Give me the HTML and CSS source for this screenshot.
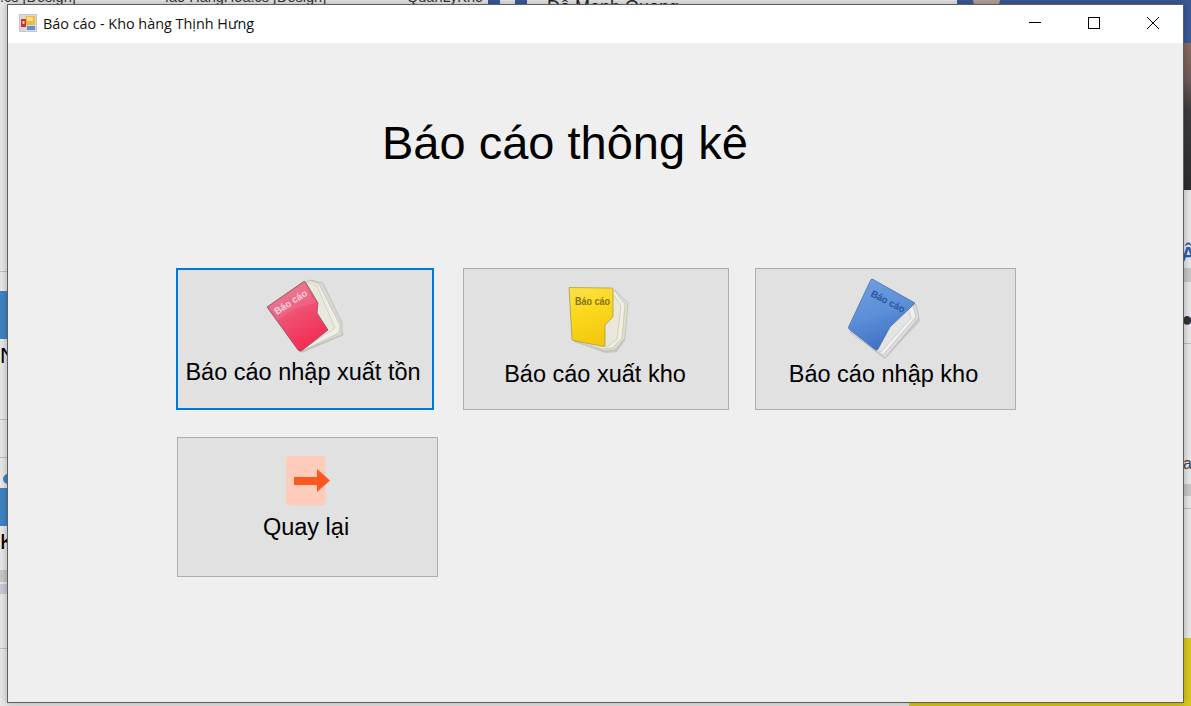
FILE: index.html
```html
<!DOCTYPE html>
<html lang="vi">
<head>
<meta charset="utf-8">
<title>Báo cáo - Kho hàng Thịnh Hưng</title>
<link rel="stylesheet" href="styles.css">
</head>
<body>
<div class="desktop">
  <div class="bg-top">
    <span class="tab tab-a">.cs [Design]</span>
    <span class="tab tab-b">fao HangHoa.cs [Design]</span>
    <span class="tab tab-c">QuanLyKho</span>
    <span class="fb-sq sq1"></span>
    <span class="fb-sq sq2"></span>
    <span class="tab-fb">Đỗ Mạnh Quang</span>
    <span class="fb-bar"></span>
    <span class="fb-face"></span>
  </div>
  <div class="bg-left-blue bl1"></div>
  <div class="bg-left-blue bl2"></div>
  <div class="bg-dot"></div>
  <div class="bg-letter l1">N</div>
  <div class="bg-letter l2">K</div>
  <div class="bg-band b1"></div>
  <div class="bg-band b2"></div>
  <div class="bg-band b3"></div>
  <div class="bg-band b4"></div>
  <div class="bg-photo"></div>
  <div class="bg-fbside"></div>
  <div class="bg-yellow"></div>
  <div class="bg-line ln1"></div>
  <div class="bg-line ln2"></div>
  <div class="bg-line ln3"></div>
  <div class="bg-line ln4"></div>
  <div class="bg-line ln5"></div>
  <div class="bg-line ln6"></div>
  <div class="bg-side side-a">Â</div>
  <div class="bg-side side-d">●</div>
  <div class="bg-side side-s">a</div>

  <main class="window">
    <header class="titlebar">
      <svg class="app-icon" width="18" height="18" viewBox="0 0 18 18">
        <rect x="0.5" y="0.5" width="17" height="17" fill="#d8d8d8" stroke="#c8c8c8"/>
        <rect x="2" y="5" width="5" height="8" fill="#c8332c"/>
        <rect x="3.5" y="7" width="2" height="3" fill="#f2d0c8"/>
        <rect x="7" y="2" width="9" height="9" fill="#f3b93a"/>
        <rect x="8" y="3" width="6" height="4" fill="#fbe08a"/>
        <rect x="8" y="12" width="8" height="4" fill="#5d8fd8"/>
      </svg>
      <span class="title-text">Báo cáo - Kho hàng Thịnh Hưng</span>
      <div class="controls">
        <button class="ctl" aria-label="Thu nhỏ"><svg width="12" height="12" viewBox="0 0 12 12"><path d="M0 5.5h12" stroke="#000" fill="none"/></svg></button>
        <button class="ctl" aria-label="Phóng to"><svg width="12" height="12" viewBox="0 0 12 12"><rect x="0.5" y="0.5" width="11" height="11" stroke="#000" fill="none"/></svg></button>
        <button class="ctl" aria-label="Đóng"><svg width="12" height="12" viewBox="0 0 12 12"><path d="M0 0L12 12M12 0L0 12" stroke="#000" fill="none"/></svg></button>
      </div>
    </header>
    <div class="form">
      <h1 class="heading">Báo cáo thông kê</h1>
      <div class="row row-one">
        <button class="tile tile-focus">
          <svg class="tile-icon icon-a" width="85" height="80" viewBox="0 0 85 80">
            <defs>
              <linearGradient id="pink" x1="0.1" y1="0" x2="0.6" y2="1"><stop offset="0" stop-color="#e57f98"/><stop offset=".45" stop-color="#ee5577"/><stop offset="1" stop-color="#f52a52"/></linearGradient>
            </defs>
            <path d="M10 36 L42 78 L84 60 L60 8 L48 5 Z" fill="#8c8c84" opacity=".3"/>
            <path d="M50 5 L63 8 L82 48 L82 60 L40 77 Z" fill="#d9d9cf" stroke="#b4b4a9" stroke-width=".7"/>
            <path d="M48 5 L59 9 L80 50 L79 58 L40 77 Z" fill="#eeeee4" stroke="#bdbdb2" stroke-width=".7"/>
            <path d="M46 6 L57 11 L75 53 L40 76 Z" fill="#e8e8dd" stroke="#c4c4b9" stroke-width=".7"/>
            <path d="M7 32 L43 7 Q45 5.5 46 8 L58 28 L57 38 L68 55 L42 75.5 Q40 77 38 75 Z" fill="url(#pink)" stroke="#7c5a62" stroke-width=".8"/>
            <path d="M9 32 L44 8 L56 28 Q32 32 18 46 Z" fill="#fff" opacity=".08"/>
            <text class="icon-label label-pink" x="17" y="40" transform="rotate(-33 17 40)" textLength="37" lengthAdjust="spacingAndGlyphs">Báo cáo</text>
          </svg>
          <span class="tile-label label-a">Báo cáo nhập xuất tồn</span>
        </button>
        <button class="tile tile-b">
          <svg class="tile-icon icon-b" width="65" height="72" viewBox="0 0 65 72">
            <defs>
              <linearGradient id="yel" x1="0" y1="0" x2="0.3" y2="1"><stop offset="0" stop-color="#fbe14a"/><stop offset=".5" stop-color="#fbd81c"/><stop offset="1" stop-color="#f4c80f"/></linearGradient>
            </defs>
            <path d="M6 56 L40 69 L52 68 L61 55 Z" fill="#8c8c84" opacity=".3"/>
            <path d="M50 6 L63 19 L60 54 L50 66 L40 67 L10 58 Z" fill="#dedfcf" stroke="#b8b8a8" stroke-width=".7"/>
            <path d="M49 6 L60 20 L57 54 L48 64 L38 65 L10 57 Z" fill="#efeee0" stroke="#c0c0b0" stroke-width=".7"/>
            <path d="M48 10 L56 22 L52 55 L42 63 L10 56 Z" fill="#e9e8da" stroke="#c6c6b6" stroke-width=".7"/>
            <path d="M4 3.5 L47 4 Q48 4 48 6 L48 33 L40 41 L40 61 Q40 63 38 62.5 L8 56.5 Q7 56 7 55 Z" fill="url(#yel)" stroke="#a1934c" stroke-width=".7"/>
            <text class="icon-label label-yellow" x="10" y="21" textLength="35" lengthAdjust="spacingAndGlyphs">Báo cáo</text>
          </svg>
          <span class="tile-label label-b">Báo cáo xuất kho</span>
        </button>
        <button class="tile tile-c">
          <svg class="tile-icon icon-c" width="80" height="84" viewBox="0 0 80 84">
            <defs>
              <linearGradient id="blu" x1="0.2" y1="0" x2="0.5" y2="1"><stop offset="0" stop-color="#6f9fe0"/><stop offset=".5" stop-color="#5b8fd8"/><stop offset="1" stop-color="#3f70c4"/></linearGradient>
            </defs>
            <path d="M5 56 L40 83 L75 45 L70 30 Z" fill="#8c8c88" opacity=".3"/>
            <path d="M71 28 L74 42 L40 82 L5 56 Z" fill="#dcdcdc" stroke="#b5b5b5" stroke-width=".7"/>
            <path d="M68 30 L71 41 L38 79 L5 54 Z" fill="#f0f0ee" stroke="#bdbdbd" stroke-width=".7"/>
            <path d="M64 34 L66 42 L36 76 L6 53 Z" fill="#e4e4e6" stroke="#c4c4c4" stroke-width=".7"/>
            <path d="M26 3.5 Q27 2.5 29 4 L70 27 L65 32 L45 51 L33 73 Q32 75 30 73.5 L4 53 Q3 51 4 50 Z" fill="url(#blu)" stroke="#4565a0" stroke-width=".7"/>
            <text class="icon-label label-blue" x="25" y="20" transform="rotate(27 25 20)" textLength="37" lengthAdjust="spacingAndGlyphs">Báo cáo</text>
          </svg>
          <span class="tile-label label-c">Báo cáo nhập kho</span>
        </button>
      </div>
      <div class="row row-two">
        <button class="tile tile-d">
          <svg class="tile-icon icon-d" width="44" height="50" viewBox="0 0 44 50">
            <rect x="0" y="0" width="39.500" height="49.500" rx="4" fill="#ffccbc"/>
            <path d="M8 21h23v-8l13 11.500-13 11.500v-7H8z" fill="#ff5722"/>
          </svg>
          <span class="tile-label label-d">Quay lại</span>
        </button>
      </div>
    </div>
  </main>
</div>
</body>
</html>
```
FILE: styles.css
```css
* { box-sizing: border-box; }
html, body { margin: 0; padding: 0; }
body { width: 1191px; height: 706px; overflow: hidden; font-family: "Liberation Sans", Arial, sans-serif; }
.desktop { position: relative; width: 1191px; height: 706px; overflow: hidden; background: #e6e6e6; }

.bg-top { position: absolute; left: 0; top: 0; width: 1191px; height: 8px; background: #e6e6e6; overflow: hidden; }
.tab { position: absolute; top: -11px; font-size: 14.500px; color: #333; white-space: nowrap; }
.tab-a { left: 0; }
.tab-b { left: 165px; }
.tab-c { left: 407px; }
.tab-fb { position: absolute; left: 547px; top: -3px; font-size: 18px; color: #222; white-space: nowrap; }
.fb-sq { position: absolute; top: 0; height: 8px; background: #3b5998; }
.sq1 { left: 488px; width: 12px; }
.sq2 { left: 515px; width: 12px; }
.fb-bar { position: absolute; left: 957px; top: 0; width: 234px; height: 8px; background: #3b5998; }
.fb-face { position: absolute; left: 973px; top: 0; width: 27px; height: 8px; border-radius: 0 0 10px 10px; background: #b8a09a; }

.bg-left-blue { position: absolute; left: 0; width: 8px; background: #3d85c6; }
.bl1 { top: 291px; height: 48px; }
.bl2 { top: 488px; height: 38px; }
.bg-dot { position: absolute; left: 3px; top: 474px; width: 10px; height: 10px; border-radius: 50%; background: #3d85c6; }
.bg-letter { position: absolute; left: 0; font-size: 22px; color: #000; }
.l1 { top: 343px; }
.l2 { top: 529px; }
.bg-band { position: absolute; height: 12px; width: 8px; background: #c6c6c6; }
.b1 { left: 0; top: 570px; }
.b2 { left: 0; top: 584px; background: #c6c8d6; height: 10px; }
.b3 { left: 1183px; top: 484px; height: 12px; }
.b4 { left: 1183px; top: 268px; height: 14px; }
.bg-photo { position: absolute; left: 1183px; top: 43px; width: 8px; height: 147px; background: linear-gradient(#8a6a60 0, #6e5a58 25%, #3e3c40 45%, #2c2c30 100%); }
.bg-fbside { position: absolute; left: 1183px; top: 0; width: 8px; height: 43px; background: #3b5998; }
.bg-yellow { position: absolute; left: 909px; top: 638px; width: 282px; height: 68px; background: #d6c81c; }
.bg-line { position: absolute; height: 1px; background: #bdbdbd; }
.ln1 { left: 0; width: 8px; top: 271px; }
.ln2 { left: 0; width: 8px; top: 419px; }
.ln3 { left: 0; width: 8px; top: 457px; }
.ln4 { left: 0; width: 8px; top: 648px; }
.ln5 { left: 1183px; width: 8px; top: 343px; }
.ln6 { left: 1183px; width: 8px; top: 508px; }
.bg-side { position: absolute; left: 1181px; font-size: 20px; line-height: 22px; }
.side-a { top: 243px; color: #2a5ca8; font-weight: 700; }
.side-d { top: 308px; color: #333; }
.side-s { top: 453px; left: 1183px; font-size: 16px; color: #444; }

.window { position: absolute; left: 7px; top: 4px; width: 1177px; height: 699px; border: 1px solid #5f5f5f; background: #efefef; display: flex; flex-direction: column; box-shadow: 0 0 7px rgba(0, 0, 0, .28); }
.titlebar { height: 38px; flex: none; background: #fff; display: flex; align-items: center; padding-left: 11px; padding-bottom: 2px; }
.app-icon { flex: none; }
.title-text { margin-left: 6px; font-family: "Open Sans", "Noto Sans", sans-serif; font-size: 14.400px; color: #111; white-space: nowrap; }
.controls { margin-left: auto; margin-right: 1px; display: flex; }
.ctl { width: 59px; height: 36px; padding: 0; border: 0; background: transparent; display: flex; align-items: center; justify-content: center; }
.ctl svg { display: block; }

.form { flex: 1; display: flex; flex-direction: column; padding-left: 168px; }
.heading { margin: 0 0 0 206px; padding-top: 70px; height: 225px; font-size: 47px; line-height: 60px; font-weight: 400; color: #000; white-space: nowrap; }
.row { display: flex; }
.row-one { height: 142px; gap: 29px; }
.row-two { margin-top: 27px; margin-left: 1px; }
.tile { position: relative; display: flex; flex-direction: column; align-items: center; padding: 0; background: #e1e1e1; border: 1px solid #adadad; color: #000; font-family: "Liberation Sans", Arial, sans-serif; font-size: 23.500px; }
.tile-focus { width: 258px; height: 142px; border: 2px solid #0078d7; }
.tile-b { width: 266px; height: 142px; }
.tile-c { width: 261px; height: 142px; margin-left: -3px; }
.tile-d { width: 261px; height: 140px; }
.tile-icon { display: block; flex: none; }
.icon-a { margin-top: 5px; margin-right: 5px; }
.icon-b { margin-top: 15px; margin-left: 3px; }
.icon-c { margin-top: 7px; margin-right: 1px; }
.icon-d { margin-top: 18px; margin-left: 1px; }
.tile-label { white-space: nowrap; line-height: 26px; }
.label-a { margin-top: 4px; margin-right: 4px; }
.label-b { margin-top: 5px; margin-right: 2px; }
.label-c { margin-top: 1px; margin-right: 4px; }
.label-d { margin-top: 8px; margin-right: 3px; }
.icon-label { font-family: "Liberation Sans", Arial, sans-serif; font-size: 10px; font-weight: 700; }
.label-pink { fill: #f8d4de; }
.label-yellow { fill: #85731f; }
.label-blue { fill: #2b55a0; }
```
